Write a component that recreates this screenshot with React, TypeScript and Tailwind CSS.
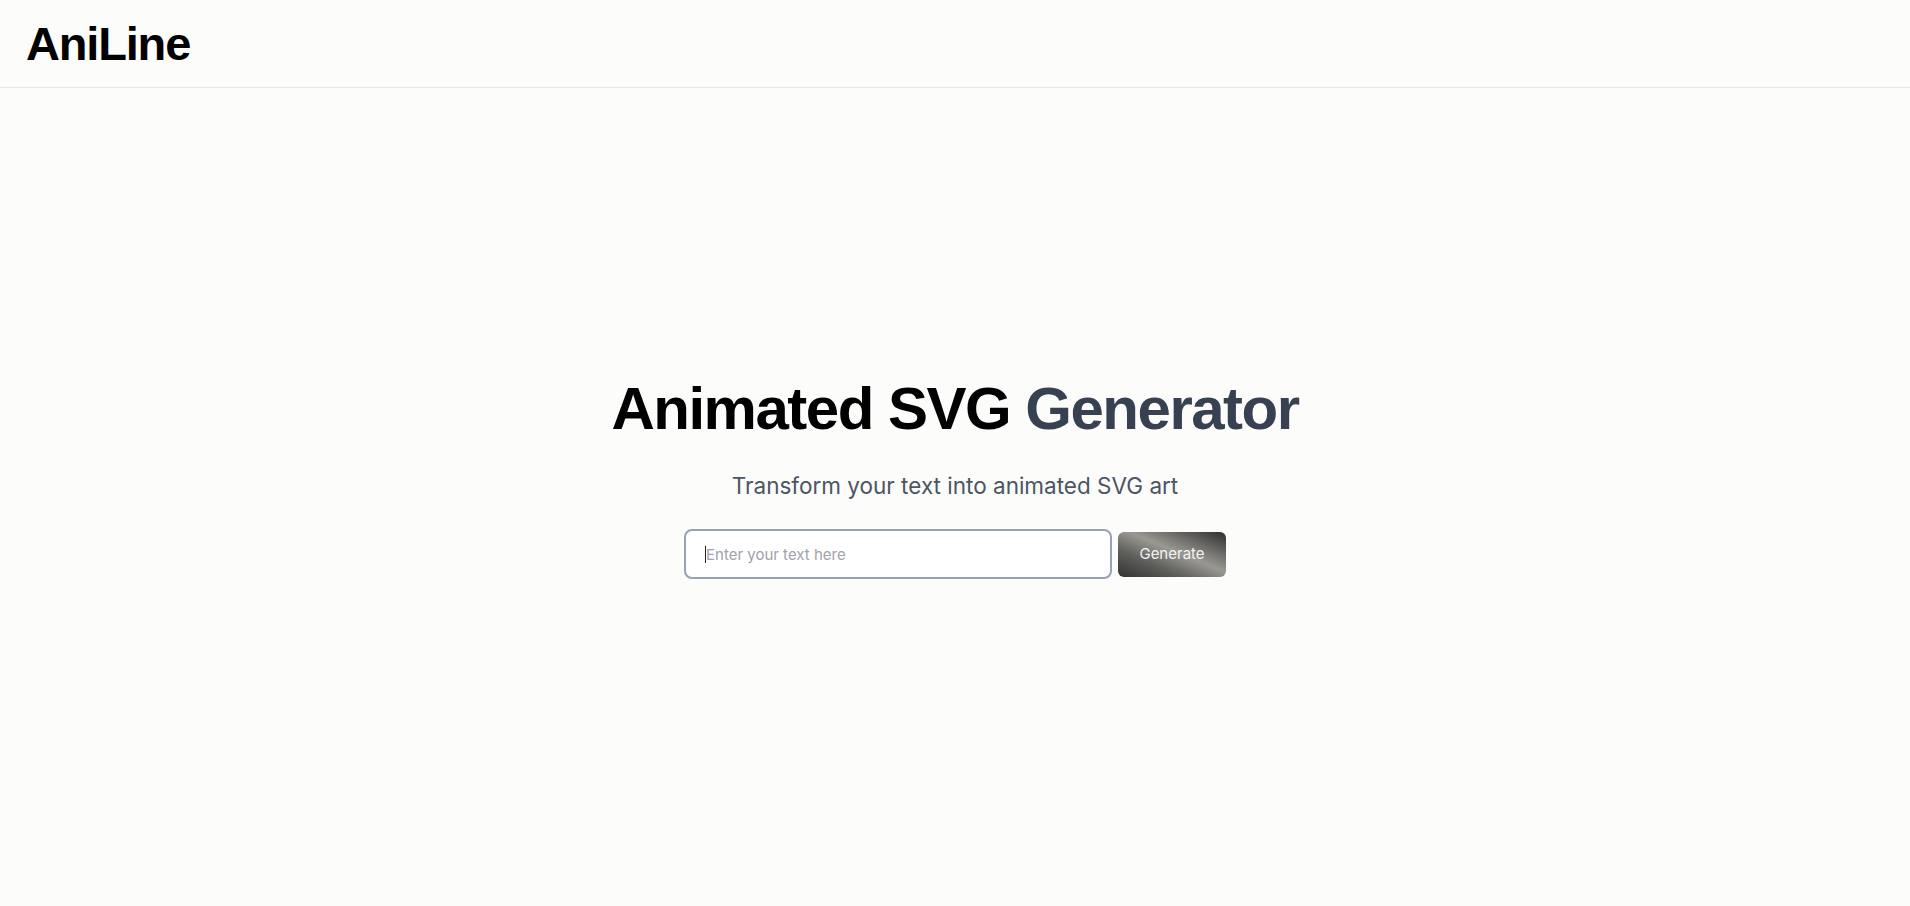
import React from "react";

export default function App() {
  return (
    <div className="min-h-[906px] w-full bg-[#fcfcfb] font-['Inter',sans-serif]">
      <header className="flex h-[88px] items-center border-b border-[#e4e6ec] pl-[26px]">
        <h1 className="font-['Liberation_Sans',Arial,sans-serif] text-[47px] font-bold leading-none tracking-tight text-black">
          AniLine
        </h1>
      </header>
      <main className="flex flex-col items-center pt-[291px]">
        <h2 className="font-['Liberation_Sans',Arial,sans-serif] text-[60px] font-bold leading-none tracking-tight text-black">
          Animated SVG <span className="text-[#374151]">Generator</span>
        </h2>
        <p className="mt-[31px] text-[22.5px] leading-[32px] text-[#4b5563]">
          Transform your text into animated SVG art
        </p>
        <div className="mt-[27px] flex items-center gap-[6px]">
          <div className="relative">
            <input
              type="text"
              placeholder="Enter your text here"
              className="h-[50px] w-[428px] rounded-lg border-2 border-[#98a2b3] bg-white pl-5 pr-4 text-[15px] text-gray-900 outline-none placeholder:text-[#a1a1aa]"
            />
            <span className="pointer-events-none absolute left-[21px] top-[17px] h-[17px] w-px bg-[#222]" />
          </div>
          <button className="h-[45px] w-[108px] rounded-md bg-[linear-gradient(to_top_right,#333333_0%,#5e5e5a_30%,#9a9892_55%,#2e2e2e_100%)] text-[15px] font-normal text-[#f4f4f4]">
            Generate
          </button>
        </div>
      </main>
    </div>
  );
}
